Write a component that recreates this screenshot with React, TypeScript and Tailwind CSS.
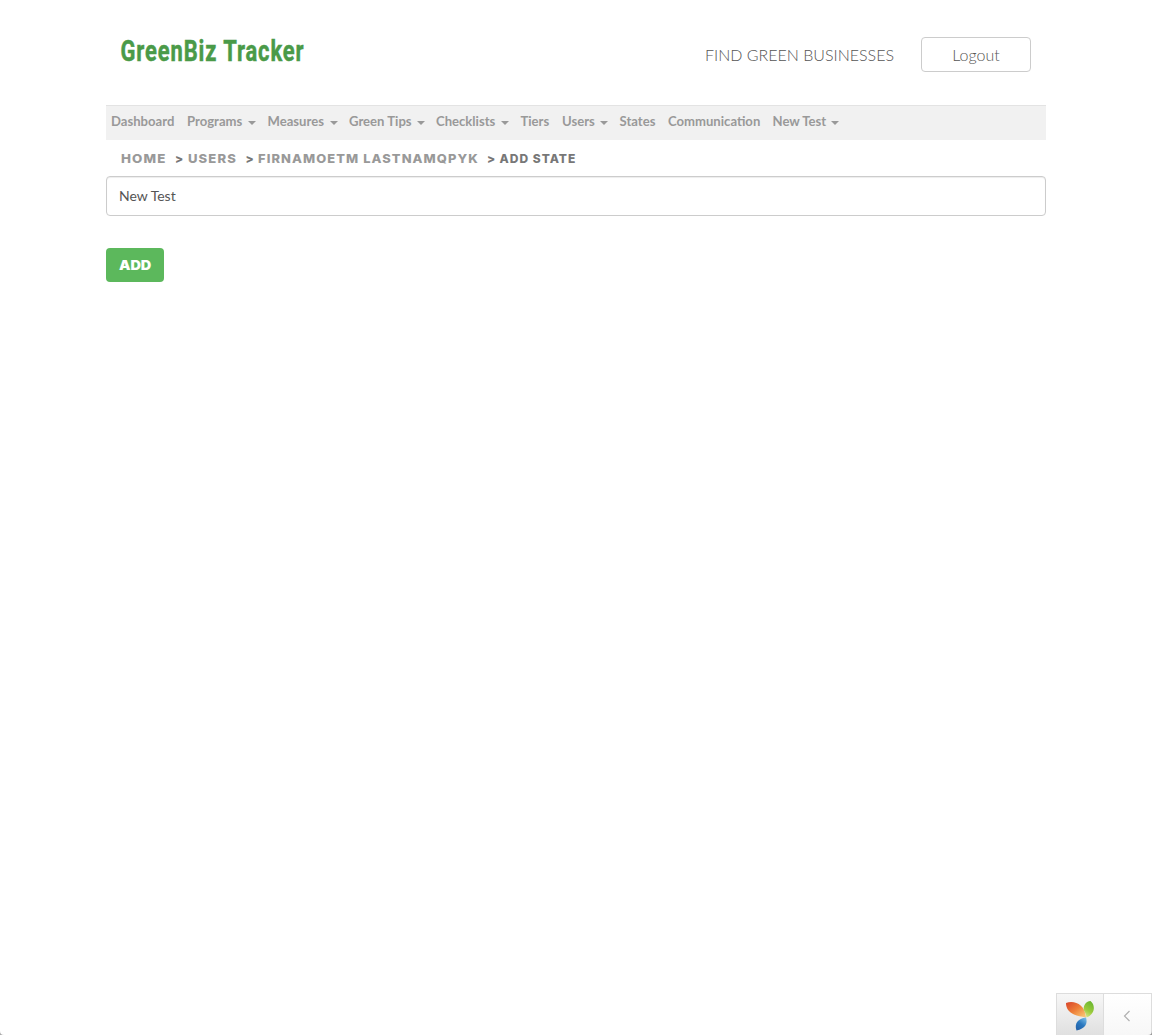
const navItems = [
  { label: 'Dashboard', width: 'w-[64.5px]' },
  { label: 'Programs', width: 'w-[56px]', menu: true },
  { label: 'Measures', width: 'w-[57px]', menu: true },
  { label: 'Green Tips', width: 'w-[62.5px]', menu: true },
  { label: 'Checklists', width: 'w-[60px]', menu: true },
  { label: 'Tiers', width: 'w-[30px]' },
  { label: 'Users', width: 'w-[33px]', menu: true },
  { label: 'States', width: 'w-[37px]' },
  { label: 'Communication', width: 'w-[93px]' },
  { label: 'New Test', width: 'w-[53.5px]', menu: true },
];

function Logo() {
  return (
    <svg width="184" height="44" viewBox="0 0 184 44" className="overflow-visible" aria-label="GreenBiz Tracker">
      <text
        x="-0.5"
        y="32"
        textLength="184"
        lengthAdjust="spacingAndGlyphs"
        fontFamily="Roboto, 'Liberation Sans', sans-serif"
        fontWeight="700"
        fontSize="29"
        letterSpacing="1.2"
        fill="#4a9a48"
        stroke="#4a9a48"
        strokeWidth="0.5"
      >
        GreenBiz Tracker
      </text>
    </svg>
  );
}

function Caret() {
  return (
    <span className="ml-[5px] mt-[3px] h-0 w-0 border-x-4 border-t-4 border-x-transparent border-t-[#999]" />
  );
}

function Separator() {
  return <span className="w-[12.5px] text-[#777]">&gt;</span>;
}

function YiiLogo() {
  return (
    <svg width="30" height="32" viewBox="0 0 30 32">
      <defs>
        <linearGradient id="leafOrange" x1="0" y1="0" x2="1" y2="1">
          <stop offset="0" stopColor="#d8432b" />
          <stop offset="0.5" stopColor="#ee8038" />
          <stop offset="1" stopColor="#fbd17c" />
        </linearGradient>
        <linearGradient id="leafGreen" x1="0.7" y1="0" x2="0.3" y2="1">
          <stop offset="0" stopColor="#68b52e" />
          <stop offset="0.6" stopColor="#9ccb3d" />
          <stop offset="1" stopColor="#d8e58a" />
        </linearGradient>
        <linearGradient id="leafBlue" x1="0.8" y1="0" x2="0.2" y2="1">
          <stop offset="0" stopColor="#75b9e5" />
          <stop offset="0.5" stopColor="#2a78bf" />
          <stop offset="1" stopColor="#2461a8" />
        </linearGradient>
      </defs>
      <path d="M1 4C9 1 20 5 21 18.500C16 17 12.500 17.500 9 15.500C4 13 1 9.500 1 4Z" fill="url(#leafOrange)" />
      <path d="M25.500 2C30.500 6 30.500 14.500 21.500 18.500C21 14.500 19.500 12.500 18.700 11C18.300 6 21 2.500 25.500 2Z" fill="url(#leafGreen)" />
      <path d="M21 18.500C23 25 20 29.500 11.500 31.500C9 24.500 13 19.500 21 18.500Z" fill="url(#leafBlue)" />
    </svg>
  );
}

export default function App() {
  return (
    <div className="relative flex h-[1035px] w-[1152px] flex-col overflow-hidden bg-white font-[Lato,sans-serif]">
      <div className="mx-auto w-[940px]">
        <header className="flex h-[105px] items-start justify-between px-[15px]">
          <div className="mt-[29px]">
            <Logo />
          </div>
          <div className="mt-[37px] flex items-start">
            <a className="mr-[27px] whitespace-nowrap text-[16px] font-light leading-[35px] text-[#555]">
              FIND GREEN BUSINESSES
            </a>
            <button className="h-[35px] w-[110px] rounded border border-[#ccc] text-[16px] font-light leading-[33px] text-[#555]">
              Logout
            </button>
          </div>
        </header>
        <nav className="flex h-[35px] gap-[11.5px] border-t border-[#e3e3e3] bg-[#f1f1f1] pl-[5px] text-[13.1px] font-bold leading-[30px] text-[#999]">
          {navItems.map((item) => (
            <a key={item.label} className="flex h-[30px] items-center whitespace-nowrap">
              <span className={item.width}>{item.label}</span>
              {item.menu && <Caret />}
            </a>
          ))}
        </nav>
        <div className="flex h-9 items-center whitespace-pre pl-[15px] pt-0.5 font-[Inter,sans-serif] text-[12px] font-extrabold tracking-[1px] text-[#999]">
          <span className="w-[54px] origin-left scale-x-[1.11]">HOME</span>
          <Separator />
          <span className="w-[58px] origin-left scale-x-[1.09]">USERS</span>
          <Separator />
          <span className="w-[229px] origin-left scale-x-[1.075]">FIRNAMOETM LASTNAMQPYK</span>
          <Separator />
          <span className="text-[#777]">ADD STATE</span>
        </div>
        <input
          className="block h-10 w-full rounded border border-[#ccc] px-3 pb-0.5 text-[14px] text-[#555] shadow-[inset_0_1px_1px_rgba(0,0,0,0.075)] outline-none"
          defaultValue="New Test"
        />
        <button className="mt-8 block h-[34px] w-[58px] rounded bg-[#5cb85c] pb-0.5 text-white">
          <span className="inline-block scale-x-[1.07] font-[Inter,sans-serif] text-[13.5px] font-black">ADD</span>
        </button>
      </div>
      <div className="absolute bottom-0 right-0 flex h-[42px] w-24 border border-b-0 border-[#ddd] bg-linear-to-b from-[#f7f7f7] to-[#e0e0e0]">
        <div className="flex w-[47px] items-center justify-center border-r border-[#ddd]">
          <YiiLogo />
        </div>
        <div className="flex flex-1 items-center justify-center bg-linear-to-b from-white to-[#f7f7f7]">
          <svg width="8" height="12" viewBox="0 0 8 12" className="mr-0.5 mt-0.5" fill="none" stroke="#b0b0b0" strokeWidth="1.2">
            <path d="M6.500 1L1.500 6L6.500 11" />
          </svg>
        </div>
      </div>
      <svg className="absolute bottom-0 left-0" width="4" height="4" viewBox="0 0 4 4">
        <path d="M0 0Q0 4 4 4H0Z" fill="#aaa" />
      </svg>
      <svg className="absolute bottom-0 right-0" width="4" height="4" viewBox="0 0 4 4">
        <path d="M4 0Q4 4 0 4H4Z" fill="#999" />
      </svg>
    </div>
  );
}
